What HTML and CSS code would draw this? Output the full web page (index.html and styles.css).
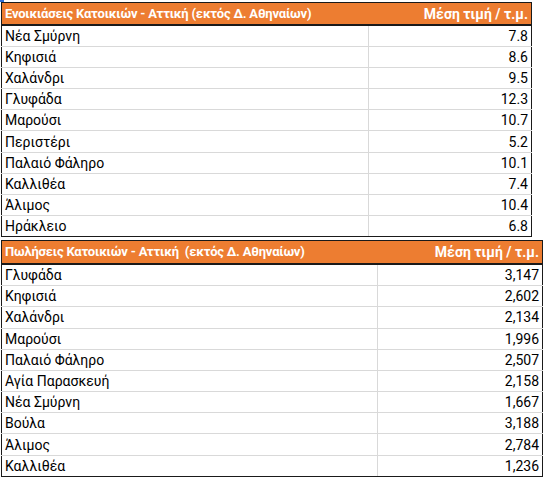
FILE: index.html
```html
<!DOCTYPE html>
<html lang="el">
<head>
<meta charset="utf-8">
<link rel="stylesheet" href="styles.css">
</head>
<body>
<div class="page">
  <span class="sel-mark"></span>
  <table class="sheet sheet-rent">
    <thead>
      <tr><th class="name">Ενοικιάσεις Κατοικιών - Αττική (εκτός Δ. Αθηναίων)</th><th class="val">Μέση τιμή / τ.μ.</th></tr>
    </thead>
    <tbody>
      <tr><td class="name">Νέα Σμύρνη</td><td class="val">7.8</td></tr>
      <tr><td class="name">Κηφισιά</td><td class="val">8.6</td></tr>
      <tr><td class="name">Χαλάνδρι</td><td class="val">9.5</td></tr>
      <tr><td class="name">Γλυφάδα</td><td class="val">12.3</td></tr>
      <tr><td class="name">Μαρούσι</td><td class="val">10.7</td></tr>
      <tr><td class="name">Περιστέρι</td><td class="val">5.2</td></tr>
      <tr><td class="name">Παλαιό Φάληρο</td><td class="val">10.1</td></tr>
      <tr><td class="name">Καλλιθέα</td><td class="val">7.4</td></tr>
      <tr><td class="name">Άλιμος</td><td class="val">10.4</td></tr>
      <tr><td class="name">Ηράκλειο</td><td class="val">6.8</td></tr>
    </tbody>
  </table>
  <table class="sheet sheet-sale">
    <thead>
      <tr><th class="name">Πωλήσεις Κατοικιών - Αττική&nbsp; (εκτός Δ. Αθηναίων)</th><th class="val">Μέση τιμή / τ.μ.</th></tr>
    </thead>
    <tbody>
      <tr><td class="name">Γλυφάδα</td><td class="val">3,147</td></tr>
      <tr><td class="name">Κηφισιά</td><td class="val">2,602</td></tr>
      <tr><td class="name">Χαλάνδρι</td><td class="val">2,134</td></tr>
      <tr><td class="name">Μαρούσι</td><td class="val">1,996</td></tr>
      <tr><td class="name">Παλαιό Φάληρο</td><td class="val">2,507</td></tr>
      <tr><td class="name">Αγία Παρασκευή</td><td class="val">2,158</td></tr>
      <tr><td class="name">Νέα Σμύρνη</td><td class="val">1,667</td></tr>
      <tr><td class="name">Βούλα</td><td class="val">3,188</td></tr>
      <tr><td class="name">Άλιμος</td><td class="val">2,784</td></tr>
      <tr><td class="name">Καλλιθέα</td><td class="val">1,236</td></tr>
    </tbody>
  </table>
</div>
</body>
</html>
```
FILE: styles.css
```css
html, body {
  margin: 0;
  padding: 0;
  background: #ffffff;
}
body {
  font-family: Roboto, "Noto Sans", "DejaVu Sans", sans-serif;
  color: #000000;
}
.page {
  position: relative;
  padding: 2px 0 0 1px;
  display: flex;
  flex-direction: column;
  gap: 3px;
}
.sel-mark {
  position: absolute;
  left: 0;
  top: 0;
  width: 4px;
  height: 2px;
  background: #2f6fd6;
}
.sheet {
  border-collapse: collapse;
  border: 1px solid #1a1a1a;
  table-layout: fixed;
}
.sheet-rent { width: 531px; }
.sheet-rent .name { width: 360px; }
.sheet-sale { width: 542px; }
.sheet-sale .name { width: 369px; }
.sheet th {
  background: #ed7d31;
  color: #ffffff;
  font-weight: 700;
  padding: 0 3px;
  border-bottom: 2px solid #1a1a1a;
  white-space: nowrap;
  line-height: 20px;
}
.sheet-rent th { height: 21px; }
.sheet-sale th { height: 22px; }
.sheet th.name {
  text-align: left;
  font-size: 13px;
  letter-spacing: -0.2px;
}
.sheet th.val {
  text-align: right;
  font-size: 14px;
}
.sheet td {
  font-size: 14px;
  line-height: 20px;
  padding: 0 3px;
  border-bottom: 1px solid #d9d9d9;
  white-space: nowrap;
}
.sheet-rent td { height: 20.1px; }
.sheet-sale td { height: 20.2px; }
.sheet td.name { text-align: left; border-right: 1px solid #d9d9d9; }
.sheet td.val { text-align: right; }
.sheet tbody tr:last-child td { border-bottom: 1px solid #1a1a1a; }
```
